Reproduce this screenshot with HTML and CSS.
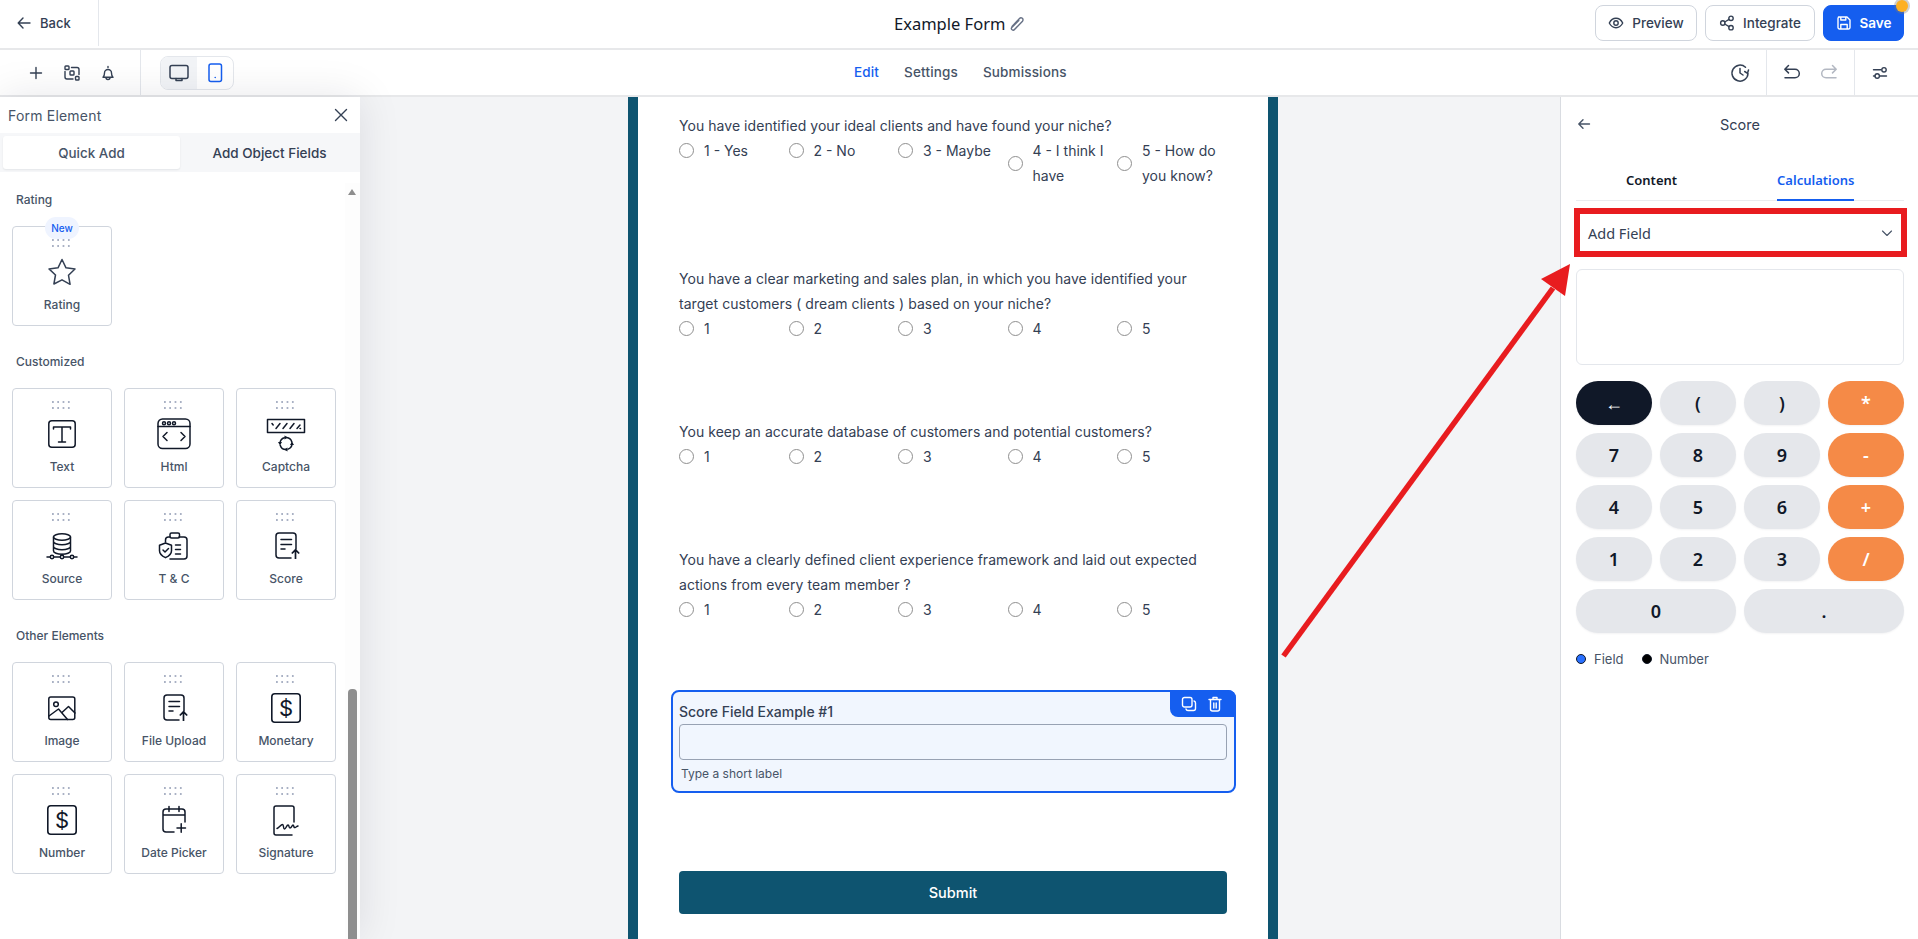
FILE: index.html
```html
<!DOCTYPE html>
<html lang="en">
<head>
<meta charset="utf-8">
<title>Example Form</title>
<link rel="stylesheet" href="styles.css">
</head>
<body>
<svg class="defs" width="0" height="0" aria-hidden="true">
  <defs>
    <symbol id="i-dollar" viewBox="0 0 40 32">
      <rect x="5.8" y="1.8" width="28.4" height="28.4" rx="3" fill="none" stroke="currentColor" stroke-width="1.6"/>
      <text x="20" y="23.5" font-family="Inter" font-size="22" text-anchor="middle" fill="currentColor">$</text>
    </symbol>
    <symbol id="i-upload" viewBox="0 0 40 32">
      <path d="M25 28H13a3 3 0 0 1-3-3V6a3 3 0 0 1 3-3h14a3 3 0 0 1 3 3v13" fill="none" stroke="currentColor" stroke-width="1.5" stroke-linecap="round"/>
      <path d="M15 9.5h10.5M15 14.5h10.5M15 19h4" fill="none" stroke="currentColor" stroke-width="1.5" stroke-linecap="round"/>
      <path d="M29.500 29v-9M25.800 23.500l3.700-3.700 3.700 3.700" fill="none" stroke="currentColor" stroke-width="1.700"/>
    </symbol>
  </defs>
</svg>

<header class="topbar">
  <div class="back">
    <svg class="ic16" viewBox="0 0 16 16"><path d="M14 8H2.500M7 3 2.200 8 7 13" /></svg>
    <span>Back</span>
  </div>
  <div class="title">
    <span>Example Form</span>
    <svg class="ic16 pencil" viewBox="0 0 16 16"><path d="M3 10.500 10.500 2.500a2 2 0 0 1 3 2.700L5.500 13.500a1.600 1.600 0 0 1-2.700-2.100L9.800 4.500"/></svg>
  </div>
  <div class="actions">
    <button class="btn">
      <svg class="ic16" viewBox="0 0 16 16"><path d="M1.300 8S3.700 3.300 8 3.300 14.700 8 14.700 8 12.300 12.700 8 12.700 1.300 8 1.300 8Z"/><circle cx="8" cy="8" r="2.200"/></svg>
      Preview
    </button>
    <button class="btn btn-int">
      <svg class="ic16" viewBox="0 0 16 16"><circle cx="12" cy="3.300" r="2.200"/><circle cx="3.800" cy="8" r="2.200"/><circle cx="12" cy="12.700" r="2.200"/><path d="m5.700 7 4.400-2.600M5.700 9l4.400 2.600"/></svg>
      Integrate
    </button>
    <button class="btn btn-save">
      <svg class="ic16" viewBox="0 0 16 16"><path d="M2.500 2h8.500L14 5v7.500a1.500 1.500 0 0 1-1.500 1.500h-9A1.500 1.500 0 0 1 2 12.500v-9A1.500 1.500 0 0 1 3.500 2ZM4.800 14V9.500h6.400V14M4.800 2v3h5V2"/></svg>
      Save
    </button>
    <span class="dot"></span>
  </div>
</header>

<nav class="toolbar">
  <div class="tools">
    <svg class="ic16 tool" viewBox="0 0 16 16"><path d="M8 2.500v11M2.500 8h11"/></svg>
    <svg class="ic16 tool" viewBox="0 0 16 16"><rect x="1" y="1" width="4" height="3.500" rx=".8"/><rect x="11.500" y="11.500" width="3.500" height="3.500" rx=".8"/><rect x="6" y="6" width="4" height="4" rx=".8"/><path d="M7.500 2.500H13a2 2 0 0 1 2 2v5M1 6.500V12a2 2 0 0 0 2 2h6"/></svg>
    <svg class="ic16 tool" viewBox="0 0 16 16"><path d="M8 1.500v1M3 12.200c1.200-1 1.500-2.200 1.500-4.200a3.500 3.500 0 0 1 7 0c0 2 .3 3.200 1.500 4.200ZM6 12.500a2 2 0 0 0 4 0"/></svg>
  </div>
  <div class="device">
    <span class="dev dev-on">
      <svg class="ic20" viewBox="0 0 20 20"><rect x="1" y="2.500" width="18" height="13" rx="2"/><path d="M7 15.500v2h6v-2"/></svg>
    </span>
    <span class="dev dev-blue">
      <svg class="ic20" viewBox="0 0 20 20"><rect x="4" y="1" width="12.500" height="17.500" rx="2"/><circle class="fill" cx="10.200" cy="14.500" r=".8"/></svg>
    </span>
  </div>
  <div class="modes">
    <span class="mode mode-on">Edit</span>
    <span class="mode">Settings</span>
    <span class="mode">Submissions</span>
  </div>
  <div class="history">
    <span class="hist-cell hist-a">
      <svg class="ic20" viewBox="0 0 20 20"><path d="M18 10.500A8 8 0 1 1 15.500 4.300M10 5.500V10l3 2M18.500 7l-1 3.300-2.800-1.800"/></svg>
    </span>
    <span class="hist-cell hist-b">
      <svg class="ic20" viewBox="0 0 20 20"><path d="M6.500 2.500 2.800 6.200l3.700 3.700M3 6.200h10a4.300 4.300 0 0 1 0 8.600H3"/></svg>
      <svg class="ic20 off" viewBox="0 0 20 20"><path d="M13.500 2.500l3.700 3.700-3.700 3.700M17 6.200H7a4.300 4.300 0 0 0 0 8.600h10"/></svg>
    </span>
    <span class="hist-cell hist-c">
      <svg class="ic16" viewBox="0 0 16 16"><path d="M1.500 4.800h7.500M1.500 11h1.500M8 11h6.500"/><circle cx="12" cy="4.800" r="2.200"/><circle cx="5.200" cy="11" r="2.200"/></svg>
    </span>
  </div>
</nav>

<main class="main">
  <aside class="left">
    <div class="left-head">
      <span>Form Element</span>
      <svg class="ic16 close" viewBox="0 0 16 16"><path d="m2.500 2.500 11 11M13.500 2.500l-11 11"/></svg>
    </div>
    <div class="seg">
      <span class="seg-item seg-on">Quick Add</span>
      <span class="seg-item seg-strong">Add Object Fields</span>
    </div>
    <div class="palette">
      <h4 class="sec">Rating</h4>
      <div class="grid">
        <div class="card">
          <span class="new">New</span>
          <i class="dots"></i>
          <svg class="pi pi-blue" viewBox="0 0 40 32"><path d="M20 3.500l4 8.300 9 1.200-6.500 6.300 1.600 9L20 23.800 11.900 28l1.600-9L7 12.900l9-1.100Z"/></svg>
          <span class="lab">Rating</span>
        </div>
      </div>

      <h4 class="sec">Customized</h4>
      <div class="grid">
        <div class="card">
          <i class="dots"></i>
          <svg class="pi" viewBox="0 0 40 32"><rect x="6.800" y="2.800" width="26.400" height="26.400" rx="3"/><path d="M11.500 11V9h17v2M20 9v15M16.500 24h7"/></svg>
          <span class="lab">Text</span>
        </div>
        <div class="card">
          <i class="dots"></i>
          <svg class="pi" viewBox="0 0 40 32"><rect x="4" y="1" width="32" height="29.500" rx="4.500"/><path d="M4 9.500h32M13 15.500l-4 4 4 4M27 15.500l4 4-4 4" transform="translate(0 -1)"/><circle cx="10" cy="5.300" r="1.500"/><circle cx="15" cy="5.300" r="1.500"/><circle cx="20" cy="5.300" r="1.500"/></svg>
          <span class="lab">Html</span>
        </div>
        <div class="card">
          <i class="dots"></i>
          <svg class="pi" viewBox="0 0 40 32"><rect x="1.500" y="1.500" width="37" height="13" /><path d="M6 5.500l1.200 1.500M10 10.500l4-5M17 10.500l4-5M24 10.500l4-5M31 10.500l3-3.500M34 10.500h.5"/><circle cx="20" cy="25.500" r="6" stroke-dasharray="7 2.400"/><path class="fill" d="M18.500 17.500l3.500 2-3.500 2ZM21.500 33.500l-3.500-2 3.500-2ZM12 24l2 3.500 2-3.500ZM24 27l2-3.500 2 3.500Z"/></svg>
          <span class="lab">Captcha</span>
        </div>
        <div class="card">
          <i class="dots"></i>
          <svg class="pi" viewBox="0 0 40 32"><ellipse cx="20" cy="7" rx="8.500" ry="3.200"/><path d="M11.500 7v14c0 1.800 3.800 3.200 8.500 3.200s8.500-1.400 8.500-3.200V7M11.500 11.500c0 1.800 3.800 3.200 8.500 3.200s8.500-1.400 8.500-3.200M11.500 16.500c0 1.800 3.800 3.200 8.500 3.200s8.500-1.400 8.500-3.200M20 24v1M5 27h3M12 27h6M22 27h6M32 27h3"/><circle cx="10" cy="27" r="1.700"/><circle cx="20" cy="27" r="1.700"/><circle cx="30" cy="27" r="1.700"/></svg>
          <span class="lab">Source</span>
        </div>
        <div class="card">
          <i class="dots"></i>
          <svg class="pi" viewBox="0 0 40 32"><path d="M16 7h-1.500a3 3 0 0 0-3 3v2M25 7h5a3 3 0 0 1 3 3v16a3 3 0 0 1-3 3H16"/><rect x="16" y="3" width="9.500" height="5" rx="1.500"/><path d="M11.500 13l6 2.200v5.500c0 3.500-3 5.500-6 7-3-1.500-6-3.500-6-7v-5.500ZM9 20l2 2 3.500-3.500M21.500 15h5M21.500 19.500h5M21.500 24h5"/></svg>
          <span class="lab">T &amp; C</span>
        </div>
        <div class="card">
          <i class="dots"></i>
          <svg class="pi-use" viewBox="0 0 40 32"><use href="#i-upload"/></svg>
          <span class="lab">Score</span>
        </div>
      </div>

      <h4 class="sec">Other Elements</h4>
      <div class="grid">
        <div class="card">
          <i class="dots"></i>
          <svg class="pi" viewBox="0 0 40 32"><rect x="6.800" y="5" width="26" height="22.500" rx="2"/><circle cx="14" cy="12.300" r="2.300"/><path d="M7 24l9.500-7 9 10.500M20.500 20l6-5.500 6.500 6.500"/></svg>
          <span class="lab">Image</span>
        </div>
        <div class="card">
          <i class="dots"></i>
          <svg class="pi-use" viewBox="0 0 40 32"><use href="#i-upload"/></svg>
          <span class="lab">File Upload</span>
        </div>
        <div class="card">
          <i class="dots"></i>
          <svg class="pi-use" viewBox="0 0 40 32"><use href="#i-dollar"/></svg>
          <span class="lab">Monetary</span>
        </div>
        <div class="card">
          <i class="dots"></i>
          <svg class="pi-use" viewBox="0 0 40 32"><use href="#i-dollar"/></svg>
          <span class="lab">Number</span>
        </div>
        <div class="card">
          <i class="dots"></i>
          <svg class="pi" viewBox="0 0 40 32"><path d="M20 28h-8a3 3 0 0 1-3-3V8a3 3 0 0 1 3-3h16a3 3 0 0 1 3 3v10M9 11h22M15 2.500v5M25 2.500v5M23 24h8.500M27.200 19.800v8.400"/></svg>
          <span class="lab">Date Picker</span>
        </div>
        <div class="card">
          <i class="dots"></i>
          <svg class="pi" viewBox="0 0 40 32"><path d="M28 18V4a2 2 0 0 0-2-2H10a2 2 0 0 0-2 2v25a2 2 0 0 0 2 2h16M11 24.500c2-1 4-4 5.500-4s.5 4.500 2 4.500 2-4 3.500-4 .5 3 2 3 2-3 3-3 .5 3 2 2.500 1.500-1 3-1.500"/></svg>
          <span class="lab">Signature</span>
        </div>
      </div>
    </div>
    <div class="scroll-track"><i class="scroll-up"></i><i class="scroll-thumb"></i></div>
  </aside>

  <section class="stage">
    <div class="form">
      <div class="question">
        <p class="q">You have identified your ideal clients and have found your niche?</p>
        <div class="opts">
          <label class="opt"><i class="radio"></i><span>1 - Yes</span></label>
          <label class="opt"><i class="radio"></i><span>2 - No</span></label>
          <label class="opt"><i class="radio"></i><span>3 - Maybe</span></label>
          <label class="opt"><i class="radio"></i><span>4 - I think I have</span></label>
          <label class="opt"><i class="radio"></i><span>5 - How do you know?</span></label>
        </div>
      </div>
      <div class="question">
        <p class="q">You have a clear marketing and sales plan, in which you have identified your target customers ( dream clients ) based on your niche?</p>
        <div class="opts">
          <label class="opt"><i class="radio"></i><span>1</span></label>
          <label class="opt"><i class="radio"></i><span>2</span></label>
          <label class="opt"><i class="radio"></i><span>3</span></label>
          <label class="opt"><i class="radio"></i><span>4</span></label>
          <label class="opt"><i class="radio"></i><span>5</span></label>
        </div>
      </div>
      <div class="question">
        <p class="q">You keep an accurate database of customers and potential customers?</p>
        <div class="opts">
          <label class="opt"><i class="radio"></i><span>1</span></label>
          <label class="opt"><i class="radio"></i><span>2</span></label>
          <label class="opt"><i class="radio"></i><span>3</span></label>
          <label class="opt"><i class="radio"></i><span>4</span></label>
          <label class="opt"><i class="radio"></i><span>5</span></label>
        </div>
      </div>
      <div class="question">
        <p class="q">You have a clearly defined client experience framework and laid out expected actions from every team member ?</p>
        <div class="opts">
          <label class="opt"><i class="radio"></i><span>1</span></label>
          <label class="opt"><i class="radio"></i><span>2</span></label>
          <label class="opt"><i class="radio"></i><span>3</span></label>
          <label class="opt"><i class="radio"></i><span>4</span></label>
          <label class="opt"><i class="radio"></i><span>5</span></label>
        </div>
      </div>
      <div class="selected">
        <div class="sel-tools">
          <svg class="ic16" viewBox="0 0 16 16"><rect x="1.500" y="1.500" width="9.500" height="9.500" rx="2"/><path d="M13 5a2 2 0 0 1 1.500 2v5.500a2 2 0 0 1-2 2H7A2 2 0 0 1 5 13"/></svg>
          <svg class="ic16" viewBox="0 0 16 16"><path d="M2 3.500h12M6 3V1.500h4V3M3.500 3.500V13a2 2 0 0 0 2 2h5a2 2 0 0 0 2-2V3.500M6.800 7v5M9.200 7v5"/></svg>
        </div>
        <p class="sel-label">Score Field Example #1</p>
        <div class="sel-input"></div>
        <p class="sel-help">Type a short label</p>
      </div>
      <div class="submit">Submit</div>
    </div>
  </section>

  <aside class="right">
    <div class="right-head">
      <svg class="ic16 rh-back" viewBox="0 0 16 16"><path d="M13.500 8H3M7 3.800 2.800 8 7 12.200"/></svg>
      <span>Score</span>
    </div>
    <div class="tabs">
      <span class="tab">Content</span>
      <span class="tab tab-on">Calculations</span>
    </div>
    <div class="picker">
      <span>Add Field</span>
      <svg class="ic16 chev" viewBox="0 0 16 16"><path d="m3.500 6 4.500 4.500L12.500 6"/></svg>
    </div>
    <div class="formula"></div>
    <div class="pad">
      <button class="key key-dark">←</button>
      <button class="key">(</button>
      <button class="key">)</button>
      <button class="key key-op">*</button>
      <button class="key">7</button>
      <button class="key">8</button>
      <button class="key">9</button>
      <button class="key key-op">-</button>
      <button class="key">4</button>
      <button class="key">5</button>
      <button class="key">6</button>
      <button class="key key-op">+</button>
      <button class="key">1</button>
      <button class="key">2</button>
      <button class="key">3</button>
      <button class="key key-op">/</button>
      <button class="key key-wide">0</button>
      <button class="key key-wide">.</button>
    </div>
    <div class="legend">
      <i class="ldot ldot-blue"></i><span>Field</span>
      <i class="ldot ldot-black"></i><span>Number</span>
    </div>
  </aside>
</main>

<svg class="arrow" viewBox="0 0 1918 939" aria-hidden="true">
  <path class="arrow-line" d="M1283.500 656 1553 288"/>
  <path class="arrow-head" d="M1570 264 1541 279 1565 296Z"/>
</svg>
</body>
</html>
```

FILE: styles.css
```css
* { box-sizing: border-box; }
html, body { margin: 0; height: 100%; overflow: hidden; }
body {
  position: relative;
  width: 1918px;
  height: 939px;
  display: flex;
  flex-direction: column;
  background: #fff;
  color: #344054;
  font-family: Inter, "Liberation Sans", sans-serif;
  font-size: 14px;
}
p, h4 { margin: 0; }
.defs { position: absolute; }

.ic16, .ic20 {
  fill: none;
  stroke: currentColor;
  stroke-width: 1.4;
  stroke-linecap: round;
  stroke-linejoin: round;
  flex: none;
}
.ic16 { width: 16px; height: 16px; }
.ic20 { width: 20px; height: 20px; stroke-width: 1.5; }
.fill { fill: currentColor; stroke: none; }

/* Top bar */
.topbar {
  height: 50px;
  flex: none;
  display: flex;
  align-items: flex-start;
  position: relative;
  border-bottom: 2px solid #e7e8ea;
}
.back {
  width: 99px;
  height: 46px;
  display: flex;
  align-items: center;
  gap: 8px;
  padding-left: 16px;
  border-right: 1px solid #e4e7ec;
  font-weight: 500;
  font-size: 13px;
}
.title {
  position: absolute;
  left: 894px;
  top: 0;
  height: 47px;
  display: flex;
  align-items: center;
  gap: 4px;
  font-family: "Noto Sans", sans-serif;
  font-size: 16.500px;
  color: #101828;
}
.pencil { color: #667085; }
.actions {
  margin-left: auto;
  padding: 5px 14px 0 0;
  display: flex;
  gap: 8px;
  position: relative;
}
.btn {
  height: 36px;
  width: 102px;
  display: flex;
  align-items: center;
  justify-content: center;
  gap: 8px;
  background: #fff;
  border: 1px solid #d0d5dd;
  border-radius: 8px;
  color: #344054;
  font: 500 13.500px Inter, sans-serif;
  padding: 0;
}
.btn-int { width: 110px; }
.btn-save {
  width: 81px;
  background: #155eef;
  border-color: #155eef;
  color: #fff;
  font-weight: 600;
}
.dot {
  position: absolute;
  right: 10px;
  top: 0;
  width: 12px;
  height: 12px;
  border-radius: 50%;
  background: #fdb022;
  box-shadow: 0 0 0 2px rgba(120, 120, 120, .35);
}

/* Toolbar */
.toolbar {
  height: 47px;
  flex: none;
  display: flex;
  align-items: center;
  position: relative;
  border-bottom: 2px solid #e7e8ea;
}
.tools {
  width: 141px;
  height: 45px;
  display: flex;
  align-items: center;
  gap: 20px;
  padding-left: 28px;
  border-right: 1px solid #e4e7ec;
}
.device {
  margin-left: 19px;
  width: 74px;
  height: 34px;
  display: flex;
  border: 1px solid #e4e7ec;
  border-radius: 8px;
  overflow: hidden;
}
.dev {
  flex: 1;
  display: flex;
  align-items: center;
  justify-content: center;
}
.dev-on { background: #f2f4f7; }
.dev-blue { color: #155eef; }
.modes {
  position: absolute;
  left: 854px;
  top: 0;
  height: 44px;
  display: flex;
  align-items: center;
  gap: 25px;
  font-weight: 500;
  font-size: 13.500px;
  letter-spacing: .15px;
  color: #475467;
}
.mode-on { color: #155eef; }
.history {
  margin-left: auto;
  height: 45px;
  display: flex;
}
.hist-cell {
  height: 100%;
  display: flex;
  align-items: center;
  justify-content: center;
}
.hist-a { width: 62px; padding-left: 10px; }
.hist-b { width: 89px; gap: 17px; border-left: 1px solid #e4e7ec; border-right: 1px solid #e4e7ec; }
.hist-c { width: 63px; padding-right: 14px; }
.off { color: #b3b8c2; }

/* Main */
.main {
  flex: 1;
  min-height: 0;
  display: flex;
}
.left {
  width: 360px;
  flex: none;
  position: relative;
  z-index: 2;
  background: #fff;
  box-shadow: 0 0 40px rgba(16, 24, 40, .1);
}
.left-head {
  height: 36px;
  display: flex;
  align-items: center;
  justify-content: space-between;
  padding: 0 8px;
  color: #475467;
  font-size: 14px;
  letter-spacing: .2px;
}
.close { color: #344054; margin-right: 3px; }
.seg {
  height: 39px;
  background: #f6f7f9;
  padding: 3px 0 3px 3px;
  display: flex;
}
.seg-item {
  width: 177px;
  display: flex;
  align-items: center;
  justify-content: center;
  font-size: 13.400px;
  font-weight: 500;
  color: #475467;
}
.seg-on {
  background: #fff;
  border-radius: 3px;
  box-shadow: 0 1px 2px rgba(16, 24, 40, .08);
}
.seg-strong { color: #344054; margin-left: 1px; font-size: 13.500px; }
.palette { padding: 20px 0 0 12px; }
.sec {
  height: 16px;
  line-height: 16px;
  font-size: 12px;
  font-weight: 500;
  color: #475467;
  padding-left: 4px;
  margin-bottom: 18px;
}
.grid {
  display: grid;
  grid-template-columns: repeat(3, 100px);
  grid-auto-rows: 100px;
  gap: 12px;
  margin-bottom: 28px;
}
.card {
  position: relative;
  border: 1px solid #d0d5dd;
  border-radius: 4px;
  display: flex;
  flex-direction: column;
  align-items: center;
  padding-top: 12px;
  background: #fff;
}
.dots {
  display: block;
  width: 20px;
  height: 8px;
  background: radial-gradient(circle at 1px 1px, #a9b1c4 1px, transparent 1.200px) 0 0 / 5.300px 6px;
}
.pi, .pi-use {
  width: 40px;
  height: 32px;
  margin-top: 9px;
  color: #101828;
  overflow: visible;
}
.pi {
  fill: none;
  stroke: currentColor;
  stroke-width: 1.5;
  stroke-linecap: round;
  stroke-linejoin: round;
}
.pi-blue { color: #344054; }
.lab {
  margin-top: 9px;
  height: 16px;
  line-height: 16px;
  font-size: 12px;
  font-weight: 500;
  color: #475467;
}
.new {
  position: absolute;
  left: 32px;
  top: -10px;
  width: 34px;
  height: 22px;
  border-radius: 11px;
  background: #eff4ff;
  color: #155eef;
  font-size: 10px;
  font-weight: 500;
  display: flex;
  align-items: center;
  justify-content: center;
}
.scroll-track {
  position: absolute;
  left: 345px;
  right: 0;
  top: 86px;
  bottom: 0;
  background: #fdfdfd;
}
.scroll-up {
  position: absolute;
  left: 3px;
  top: 6px;
  width: 0;
  height: 0;
  border-left: 4.500px solid transparent;
  border-right: 4.500px solid transparent;
  border-bottom: 6px solid #8e8e8e;
}
.scroll-thumb {
  position: absolute;
  left: 3px;
  width: 9px;
  top: 506px;
  bottom: 0;
  background: #8e8e8e;
  border-radius: 4px 4px 0 0;
}

/* Canvas */
.stage {
  flex: 1;
  min-width: 0;
  background: #f3f4f6;
  display: flex;
  justify-content: center;
  padding-right: 14px;
  overflow: hidden;
}
.form {
  width: 650px;
  border-left: 10px solid #0e5470;
  border-right: 10px solid #0e5470;
  background: #fff;
  padding: 16px 41px 0;
  line-height: 25px;
  color: #344054;
}
.question { margin-bottom: 78px; }
.q { padding-right: 8px; letter-spacing: .05px; }
.opts { display: flex; align-items: flex-start; }
.opt {
  width: 109.500px;
  flex: none;
  display: flex;
  align-items: center;
  gap: 10px;
  padding-right: 6px;
}
.radio {
  width: 15px;
  height: 15px;
  flex: none;
  border: 1.500px solid #8f8f8f;
  border-radius: 50%;
  background: #fff;
}
.selected {
  position: relative;
  margin: -10px -9px 78px -8px;
  height: 103px;
  border: 2px solid #155eef;
  border-radius: 8px;
  background: #f1f6fe;
  padding: 8px 7px 0 6px;
}
.sel-tools {
  position: absolute;
  top: -2px;
  right: -2px;
  width: 66px;
  height: 27px;
  background: #155eef;
  border-radius: 0 8px 0 8px;
  color: #fff;
  display: flex;
  align-items: center;
  gap: 10px;
  padding-left: 11px;
}
.sel-label { height: 24px; line-height: 24px; font-weight: 500; font-size: 14px; }
.sel-input {
  height: 36px;
  border: 1px solid #98a2b3;
  border-radius: 4px;
}
.sel-help {
  height: 28px;
  line-height: 28px;
  font-size: 12px;
  color: #475467;
  padding-left: 2px;
}
.submit {
  height: 43px;
  border-radius: 4px;
  background: #0e5470;
  color: #fff;
  font-size: 14.500px;
  font-weight: 500;
  display: flex;
  align-items: center;
  justify-content: center;
}

/* Right panel */
.right {
  width: 358px;
  flex: none;
  background: #fff;
  border-left: 1px solid #d9dce1;
  padding: 0 14px 0 15px;
}
.right-head {
  position: relative;
  height: 54px;
  display: flex;
  align-items: center;
  justify-content: center;
  font-size: 14.500px;
  color: #344054;
}
.rh-back { position: absolute; left: 0; color: #475467; }
.tabs {
  height: 50px;
  margin-top: 0;
  padding: 10px 0 0 50px;
  display: flex;
  gap: 100px;
  border-bottom: 1px solid #eaecf0;
}
.tab {
  height: 40px;
  line-height: 38px;
  font-family: "Noto Sans", sans-serif;
  font-size: 13px;
  font-weight: 600;
  color: #101828;
}
.tab-on {
  color: #155eef;
  border-bottom: 2px solid #155eef;
}
.picker {
  height: 49px;
  margin: 7px -3px 0 -2px;
  border: 6px solid #e81c1f;
  display: flex;
  align-items: center;
  justify-content: space-between;
  padding: 0 6px 0 8px;
  font-family: "Noto Sans", sans-serif;
  font-size: 14.500px;
  color: #344054;
}
.chev { color: #475467; stroke-width: 1.1; }
.formula {
  height: 96px;
  margin-top: 12px;
  border: 1px solid #e4e7ec;
  border-radius: 6px;
}
.pad {
  margin-top: 16px;
  display: grid;
  grid-template-columns: repeat(4, 76px);
  grid-auto-rows: 44px;
  gap: 8px;
}
.key {
  border: 0;
  padding: 0;
  border-radius: 22px;
  background: #e5e7eb;
  color: #101828;
  font: 600 18px "Noto Sans", sans-serif;
  box-shadow: 0 1px 2px rgba(16, 24, 40, .05);
}
.key-dark { background: #101828; color: #fff; }
.key-op { background: #f58a47; color: #fff; }
.key-wide { grid-column: span 2; }
.legend {
  margin-top: 16px;
  height: 20px;
  display: flex;
  align-items: center;
  font-size: 13px;
  color: #475467;
}
.ldot {
  width: 10px;
  height: 10px;
  border-radius: 50%;
  border: 1px solid #101828;
  margin-right: 8px;
}
.ldot-blue { background: #2970ff; }
.ldot-black { background: #000; margin-left: 18px; }

/* Annotation */
.arrow {
  position: absolute;
  left: 0;
  top: 0;
  width: 1918px;
  height: 939px;
  pointer-events: none;
  z-index: 5;
}
.arrow-line { stroke: #e81c1f; stroke-width: 5.500; fill: none; }
.arrow-head { fill: #e81c1f; }
```
